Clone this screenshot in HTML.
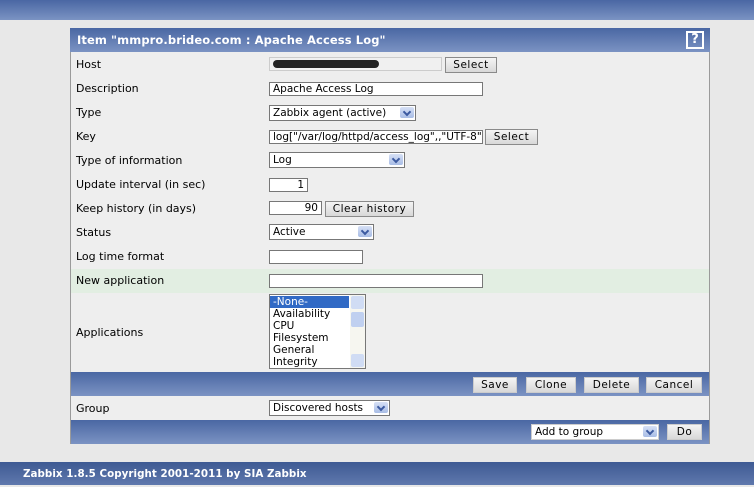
<!DOCTYPE html>
<html><head><meta charset="utf-8"><style>
*{box-sizing:border-box;margin:0;padding:0}
body{width:754px;height:487px;background:#e8e8e8;font-family:"DejaVu Sans","Liberation Sans",sans-serif;font-size:11px;color:#000;position:relative;overflow:hidden}
.a{position:absolute}
.bar{background:linear-gradient(#4a67a3,#7b93c3)}
.panel{left:70px;top:28px;width:640px;height:416px;background:#eeeeee;border:1px solid #9a9a9a;border-top:none}
.lbl{left:76px;line-height:14px;top:0}
.inp{background:#fff;border:1px solid #777;height:14px;line-height:12px;padding-left:3px;white-space:nowrap;overflow:hidden;font-size:10.5px}
.btn{background:linear-gradient(#f4f4f4,#d8d8d8);border:1px solid #8a8a8a;height:16px;line-height:14px;text-align:center;letter-spacing:0.5px;font-size:10.5px}
.sel .dd{position:absolute;right:1px;top:1px;width:14px;height:11px;background:linear-gradient(#d6e0f5,#a9bde6);border-radius:2px}
.dd:after{content:"";position:absolute;left:4px;top:2px;width:4px;height:4px;border-right:2px solid #3c5aa0;border-bottom:2px solid #3c5aa0;transform:rotate(45deg)}
</style></head><body>
<div class="a bar" style="left:0;top:0;width:754px;height:20px"></div>
<div class="a panel"></div>
<div class="a bar" style="left:70px;top:28px;width:640px;height:24px"></div>
<div class="a" style="left:77px;top:33px;color:#fff;font-weight:bold;font-size:11.5px;letter-spacing:0.1px">Item "mmpro.brideo.com : Apache Access Log"</div>
<div class="a" style="left:686px;top:31px;width:18px;height:18px;border:2px solid #fff;color:#fff;font-weight:bold;font-size:13px;text-align:center;line-height:14px">?</div>

<div class="a lbl" style="top:58px">Host</div>
<div class="a inp" style="left:269px;top:57px;width:173px;background:#f0f0f0;border-color:#ccc"><span style="display:inline-block;margin-top:2px;width:106px;height:8px;background:#222;border-radius:4px"></span></div>
<div class="a btn" style="left:445px;top:57px;width:52px">Select</div>

<div class="a lbl" style="top:82px">Description</div>
<div class="a inp" style="left:269px;top:82px;width:214px">Apache Access Log</div>

<div class="a lbl" style="top:106px">Type</div>
<div class="a inp sel" style="left:269px;top:105px;width:147px;height:16px;line-height:14px">Zabbix agent (active)<span class="dd"></span></div>

<div class="a lbl" style="top:130px">Key</div>
<div class="a inp" style="left:269px;top:130px;width:214px">log["/var/log/httpd/access_log",,"UTF-8"]</div>
<div class="a btn" style="left:485px;top:129px;width:53px">Select</div>

<div class="a lbl" style="top:154px">Type of information</div>
<div class="a inp sel" style="left:269px;top:152px;width:136px;height:16px;line-height:14px">Log<span class="dd"></span></div>

<div class="a lbl" style="top:178px">Update interval (in sec)</div>
<div class="a inp" style="left:269px;top:178px;width:39px;text-align:right;padding-right:3px">1</div>

<div class="a lbl" style="top:202px">Keep history (in days)</div>
<div class="a inp" style="left:269px;top:201px;width:53px;text-align:right;padding-right:3px">90</div>
<div class="a btn" style="left:325px;top:201px;width:89px">Clear history</div>

<div class="a lbl" style="top:226px">Status</div>
<div class="a inp sel" style="left:269px;top:224px;width:105px;height:16px;line-height:14px">Active<span class="dd"></span></div>

<div class="a lbl" style="top:250px">Log time format</div>
<div class="a inp" style="left:269px;top:250px;width:94px"></div>

<div class="a" style="left:71px;top:269px;width:638px;height:24px;background:#e2eee2"></div>
<div class="a lbl" style="top:274px">New application</div>
<div class="a inp" style="left:269px;top:274px;width:214px"></div>

<div class="a lbl" style="top:326px">Applications</div>
<div class="a" style="left:269px;top:294px;width:97px;height:75px;background:#fff;border:1px solid #777;line-height:12px;padding-top:1px;font-size:10.5px">
<div style="background:#316ac5;color:#fff;width:79px;padding-left:3px">-None-</div>
<div style="padding-left:3px">Availability</div><div style="padding-left:3px">CPU</div><div style="padding-left:3px">Filesystem</div><div style="padding-left:3px">General</div><div style="padding-left:3px">Integrity</div>
<div class="a" style="left:80px;top:0;width:15px;height:73px;background:#f6f6f0"></div>
<div class="a" style="left:81px;top:1px;width:13px;height:13px;background:#d0dcf4;border-radius:2px"></div>
<div class="a" style="left:81px;top:17px;width:13px;height:15px;background:#c0d0f0;border-radius:2px"></div>
<div class="a" style="left:81px;top:59px;width:13px;height:13px;background:#d0dcf4;border-radius:2px"></div>
</div>

<div class="a bar" style="left:71px;top:372px;width:638px;height:24px"></div>
<div class="a btn" style="left:473px;top:377px;width:44px;border-color:#ccc">Save</div>
<div class="a btn" style="left:526px;top:377px;width:50px;border-color:#ccc">Clone</div>
<div class="a btn" style="left:584px;top:377px;width:55px;border-color:#ccc">Delete</div>
<div class="a btn" style="left:646px;top:377px;width:56px;border-color:#ccc">Cancel</div>

<div class="a lbl" style="top:402px">Group</div>
<div class="a inp sel" style="left:269px;top:400px;width:121px;height:16px;line-height:14px">Discovered hosts<span class="dd"></span></div>

<div class="a bar" style="left:71px;top:420px;width:638px;height:24px"></div>
<div class="a inp sel" style="left:531px;top:424px;width:128px;height:16px;line-height:14px;border-color:#ccc">Add to group<span class="dd"></span></div>
<div class="a btn" style="left:667px;top:424px;width:35px;border-color:#ccc">Do</div>

<div class="a bar" style="left:0;top:462px;width:754px;height:23px;background:linear-gradient(#3e5a93,#5f78ad)"></div>
<div class="a" style="left:23px;top:468px;color:#fff;font-weight:bold;font-size:10.3px;letter-spacing:0.05px">Zabbix 1.8.5 Copyright 2001-2011 by SIA Zabbix</div>
</body></html>
